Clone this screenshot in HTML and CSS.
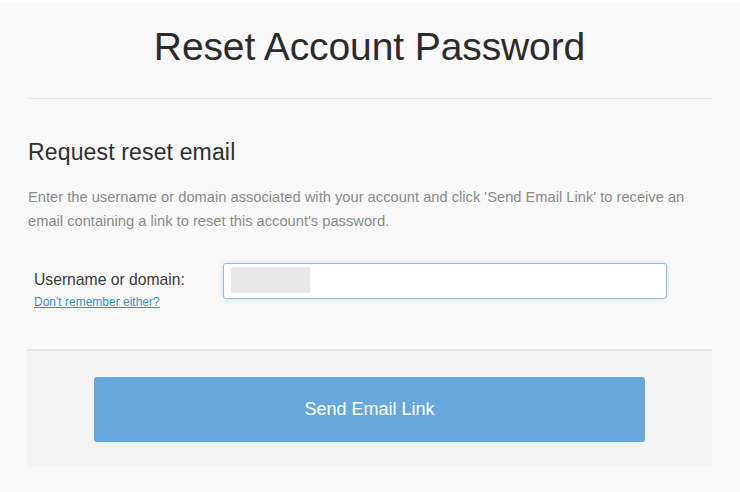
FILE: index.html
```html
<!DOCTYPE html>
<html lang="en">
<head>
<meta charset="utf-8">
<title>Reset Account Password</title>
<link rel="stylesheet" href="styles.css">
</head>
<body>
<div class="page">
  <header class="header">
    <h1 class="title">Reset Account Password</h1>
  </header>
  <section class="content">
    <h2 class="subtitle">Request reset email</h2>
    <p class="desc">Enter the username or domain associated with your account and click 'Send Email Link' to receive an email containing a link to reset this account's password.</p>
    <div class="form-row">
      <div class="label-col">
        <label class="label" for="user">Username or domain:</label>
        <a class="help-link" href="#">Don't remember either?</a>
      </div>
      <div class="input-wrap">
        <input id="user" class="input" type="text">
        <span class="redact"></span>
      </div>
    </div>
  </section>
  <footer class="footer">
    <button class="btn" type="button">Send Email Link</button>
  </footer>
</div>
</body>
</html>
```

FILE: styles.css
```css
* { box-sizing: border-box; }
html, body { margin: 0; padding: 0; }
body {
  background: #f9f9f9;
  font-family: "Liberation Sans", Arial, sans-serif;
  color: #333;
  width: 740px;
  height: 492px;
  overflow: hidden;
  border-top: 2px solid #ffffff;
}
.page {
  margin: 0 28px 0 27px;
}
.header {
  border-bottom: 1px solid #e9e9e9;
  height: 97px;
  display: flex;
  justify-content: center;
}
.title {
  margin: 23px 0 0;
  font-size: 39px;
  font-weight: normal;
  color: #2b2b2b;
  line-height: 44px;
  letter-spacing: -0.1px;
}
.content {
  padding: 39px 0 0 1px;
  height: 250px;
}
.subtitle {
  margin: 0;
  font-size: 23px;
  font-weight: normal;
  color: #2e2e2e;
  line-height: 28px;
  letter-spacing: 0.15px;
}
.desc {
  margin: 19px 0 0;
  font-size: 14.7px;
  line-height: 24px;
  color: #8a8a8a;
  max-width: 666px;
}
.form-row {
  display: flex;
  margin-top: 30px;
}
.label-col {
  width: 195px;
  padding: 7px 0 0 6px;
  display: flex;
  flex-direction: column;
}
.label {
  font-size: 15.7px;
  color: #3a3a3a;
  line-height: 20px;
}
.help-link {
  margin-top: 5px;
  font-size: 12px;
  color: #3b8cc4;
  text-decoration: underline;
  line-height: 14px;
}
.input-wrap {
  position: relative;
  width: 444px;
  height: 36px;
}
.input {
  width: 100%;
  height: 100%;
  border: 1px solid #98bcd8;
  border-radius: 3px;
  background: #ffffff;
  box-shadow: 0 0 5px rgba(120, 180, 230, 0.35);
  outline: none;
  font-size: 14px;
}
.redact {
  position: absolute;
  left: 8px;
  top: 4px;
  width: 79px;
  height: 26px;
  background: #e8e8e8;
}
.footer {
  border-top: 2px solid #e6e6e6;
  background: #f3f3f3;
  height: 118px;
  padding: 26px 67px 0;
}
.btn {
  display: block;
  width: 100%;
  height: 65px;
  border: none;
  border-radius: 3px;
  background: #66a8dc;
  color: #ffffff;
  font-family: "Liberation Sans", Arial, sans-serif;
  font-size: 18px;
  cursor: pointer;
}
```
